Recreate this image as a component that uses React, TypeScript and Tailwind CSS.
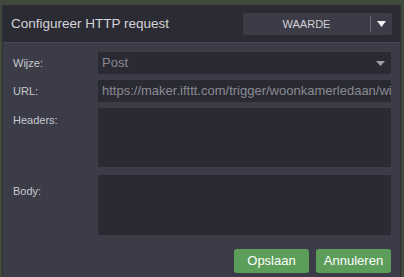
import React from 'react'

export default function App() {
  const font = { fontFamily: '"Liberation Sans", Arial, sans-serif' }
  return (
    <div className="w-[404px] h-[277px] bg-[#3f4a3c] overflow-hidden" style={font}>
      <div className="ml-[2px] mt-[5px] w-[399px] h-[280px] bg-[#3c3c48] border border-[#2e2e36]">
        {/* Header */}
        <div className="flex items-center justify-between h-[37px] px-[8px] bg-[#2b2b34] border-b border-[#4a4a56]">
          <span className="text-[13.5px] text-[#d4d4d8]">Configureer HTTP request</span>
          <div className="flex items-center w-[149px] h-[22px] bg-[#3c3c48] rounded-[2px]">
            <span className="flex-1 text-center text-[11px] text-[#d0d0d6]">WAARDE</span>
            <span className="w-px h-[16px] bg-[#6a6a76]" />
            <span className="w-[21px] flex justify-center">
              <svg width="9" height="6" viewBox="0 0 9 6"><path d="M0 0h9L4.5 6z" fill="#f0f0f0" /></svg>
            </span>
          </div>
        </div>

        {/* Form */}
        <div className="flex flex-col gap-[6px] pt-[9px] pl-[10px] pr-[9px]">
          <div className="flex items-center">
            <label className="w-[85px] text-[11px] text-[#c8c8ce]">Wijze:</label>
            <div className="flex-1 flex items-center justify-between h-[22px] bg-[#2a2a32] px-[4px]">
              <span className="text-[13px] text-[#8a8a94]">Post</span>
              <svg width="9" height="5" viewBox="0 0 9 5" className="mr-[2px]"><path d="M0 0h9L4.5 5z" fill="#a0a0a8" /></svg>
            </div>
          </div>
          <div className="flex items-center">
            <label className="w-[85px] text-[11px] text-[#c8c8ce]">URL:</label>
            <div className="flex-1 flex items-center h-[22px] bg-[#2a2a32] px-[4px] overflow-hidden whitespace-nowrap">
              <span className="text-[13px] text-[#8a8a94]">https://maker.ifttt.com/trigger/woonkamerledaan/wi</span>
            </div>
          </div>
          <div className="flex items-start">
            <label className="w-[85px] pt-[4px] text-[11px] text-[#c8c8ce]">Headers:</label>
            <div className="flex-1 h-[59px] bg-[#2a2a32]" />
          </div>
          <div className="flex items-start mt-[2px]">
            <label className="w-[85px] pt-[8px] text-[11px] text-[#c8c8ce]">Body:</label>
            <div className="flex-1 h-[60px] bg-[#2a2a32]" />
          </div>
          <div className="flex justify-end gap-[7px] mt-[8px]">
            <button className="w-[75px] h-[24px] rounded-[3px] bg-[#5c9d5a] text-[13px] text-white">Opslaan</button>
            <button className="w-[75px] h-[24px] rounded-[3px] bg-[#5c9d5a] text-[13px] text-white">Annuleren</button>
          </div>
        </div>
      </div>
    </div>
  )
}
